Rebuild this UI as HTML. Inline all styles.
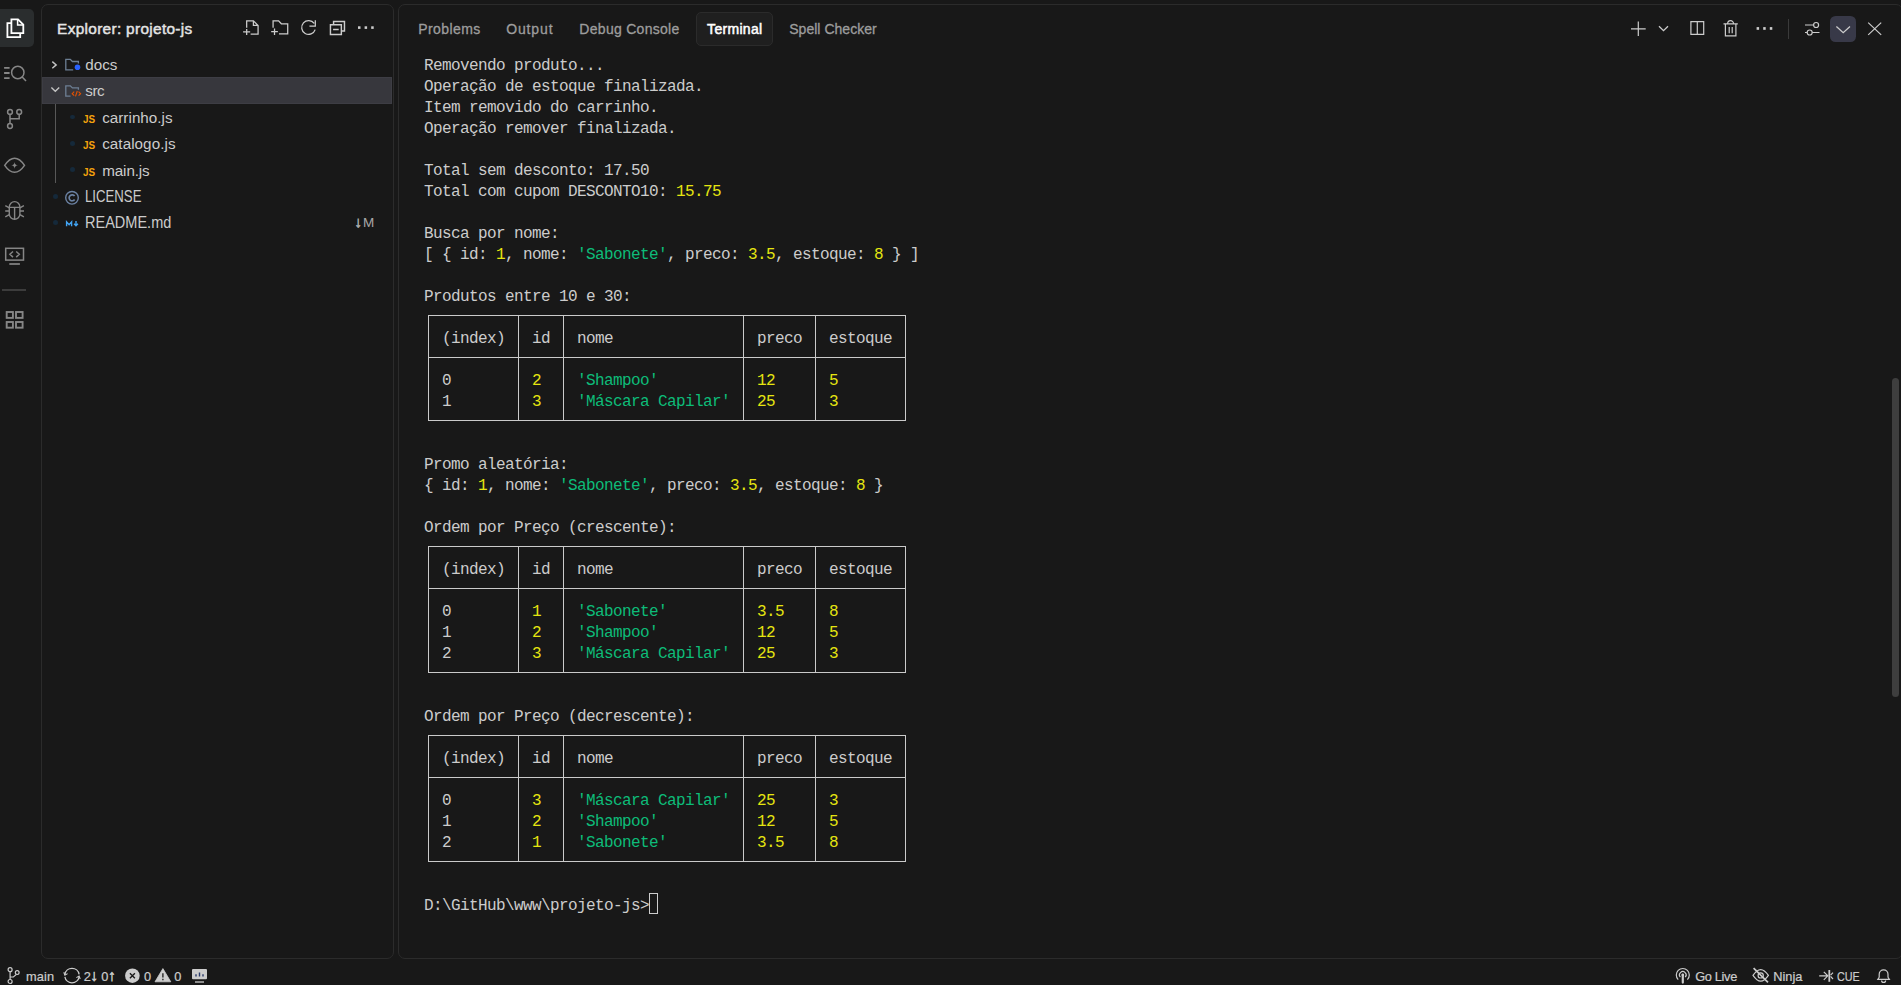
<!DOCTYPE html>
<html lang="pt-BR">
<head>
<meta charset="utf-8">
<title>projeto-js - Terminal</title>
<style>
*{box-sizing:border-box;margin:0;padding:0}
html,body{width:1901px;height:985px;overflow:hidden;background:#181818}
body{position:relative;font-family:"Liberation Sans",sans-serif;color:#ccc;font-size:15.6px}
#ico{position:absolute;left:0;top:0;width:1901px;height:985px;pointer-events:none}
/* activity bar */
#act-active{position:absolute;left:-6px;top:9px;width:40px;height:38px;border-radius:5px;background:#2a2d2e}
#act-sep{position:absolute;left:2px;top:289px;width:24px;height:2px;background:#3c3c3c}
/* sidebar */
#side{position:absolute;left:41px;top:4px;width:353px;height:955px;border:1px solid #2b2b2b;border-radius:7px;background:#181818}
.row{position:absolute;left:42px;width:350px;height:27px}
.row.sel{background:#37373d;box-shadow:inset 0 0 0 1px #3d3d44}
.ttl,.lbl,.bdg,.tab,.st,.js{position:absolute;white-space:nowrap;line-height:22px;transform-origin:0 0}
.ttl{font-size:15.4px;color:#e4e4e4;-webkit-text-stroke:0.45px #e4e4e4}
.lbl{font-size:15.2px;color:#ccc}
.lbl.cap{font-size:15.7px}
.bdg{font-size:13.5px;color:#a8a8a8}
.dot{position:absolute;width:5.2px;height:4.8px;border-radius:2.5px;background:#15293a}
#guide{position:absolute;left:55px;top:104px;width:1px;height:79px;background:#585858}
.js{font-weight:bold;font-size:10.8px;color:#f5a30c}
.ar{font-size:15.5px;line-height:10px;-webkit-text-stroke:0.5px #ccc}
.ar2{font-size:15px;line-height:10px;-webkit-text-stroke:0.6px #a8a8a8}
/* panel */
#panel{position:absolute;left:398px;top:4px;width:1505px;height:955px;border:1px solid #2b2b2b;border-radius:7px;background:#181818}
.tab{font-size:14px;color:#9d9d9d;-webkit-text-stroke:0.3px #9d9d9d}
.tab.on{color:#fff;-webkit-text-stroke:0.5px #fff}
#tab-active{position:absolute;left:696px;top:12px;width:77px;height:34px;border:1px solid #2b2b2b;border-radius:5px;background:#1f1f1f}
#chev-bg{position:absolute;left:1830.4px;top:16.1px;width:26px;height:26.4px;border-radius:5.5px;background:#383948}
#hdr-sep{position:absolute;left:1788px;top:19px;width:1px;height:20px;background:#3a3a3a}
#scroll{position:absolute;left:1892px;top:378px;width:7px;height:319px;border-radius:3.5px;background:#3e3e3e}
/* terminal */
.tl{position:absolute;left:424px;height:21px;line-height:21px;font-family:"Liberation Mono",monospace;font-size:16px;letter-spacing:-0.6016px;color:#ccc;white-space:pre}
.y{color:#e5e510}.g{color:#0dbc79}
.hl{position:absolute;height:1px;background:#cacaca}
.vl{position:absolute;width:1px;background:#cacaca}
#cursor{position:absolute;left:649px;top:893px;width:9px;height:21px;border:1px solid #ccc}
/* status */
.st{font-size:12.8px;color:#ccc;-webkit-text-stroke:0.2px #ccc}
</style>
</head>
<body>
<!-- ACTIVITY BAR -->
<div id="act-active"></div>
<div id="act-sep"></div>

<!-- SIDEBAR -->
<div id="side"></div>
<div class="row sel" style="top:77px"></div>
<div id="guide"></div>
<div class="dot" style="left:69.8px;top:114.6px"></div>
<div class="dot" style="left:69.8px;top:141px"></div>
<div class="dot" style="left:69.8px;top:167.4px"></div>
<div class="dot" style="left:52.8px;top:194.1px"></div>
<div class="dot" style="left:52.8px;top:220.2px"></div>

<!-- PANEL -->
<div id="panel"></div>
<div id="tab-active"></div>
<div id="chev-bg"></div>
<div id="hdr-sep"></div>
<div id="scroll"></div>

<!-- TEXT LABELS -->
<div class="ttl" style="left:57.12px;top:17.60px;letter-spacing:0.314px">Explorer: projeto-js</div>
<div class="lbl" style="left:85.22px;top:54.00px;letter-spacing:0.040px">docs</div>
<div class="lbl" style="left:85.22px;top:80.40px;letter-spacing:-0.383px">src</div>
<div class="lbl" style="left:102.18px;top:106.80px;letter-spacing:0.035px">carrinho.js</div>
<div class="lbl" style="left:102.18px;top:133.20px;letter-spacing:0.070px">catalogo.js</div>
<div class="lbl" style="left:102.22px;top:159.60px;letter-spacing:-0.105px">main.js</div>
<div class="lbl cap" style="left:85.36px;top:186.00px;letter-spacing:0.000px;transform:scaleX(0.8409)">LICENSE</div>
<div class="lbl cap" style="left:85.36px;top:212.40px;letter-spacing:0.000px;transform:scaleX(0.9252)">README.md</div>
<div class="bdg" style="left:354.62px;top:212.20px;letter-spacing:0.860px"><span class="ar2">↓</span>M</div>
<div class="tab" style="left:418.34px;top:18.00px;letter-spacing:0.394px">Problems</div>
<div class="tab" style="left:506.16px;top:18.00px;letter-spacing:0.883px">Output</div>
<div class="tab" style="left:579.34px;top:18.00px;letter-spacing:0.289px">Debug Console</div>
<div class="tab on" style="left:707.08px;top:18.00px;letter-spacing:0.315px">Terminal</div>
<div class="tab" style="left:789.26px;top:18.00px;letter-spacing:0.026px">Spell Checker</div>
<div class="st" style="left:26.08px;top:966.20px;letter-spacing:0.124px">main</div>
<div class="st" style="left:83.70px;top:966.20px;letter-spacing:-0.279px">2<span class="ar">↓</span> 0<span class="ar">↑</span></div>
<div class="st" style="left:143.90px;top:966.20px;letter-spacing:0.475px">0</div>
<div class="st" style="left:174.20px;top:966.20px;letter-spacing:0.475px">0</div>
<div class="st" style="left:1695.20px;top:966.20px;letter-spacing:-0.341px">Go Live</div>
<div class="st" style="left:1773.20px;top:966.20px;letter-spacing:0.026px">Ninja</div>
<div class="st" style="left:1837.14px;top:966.20px;letter-spacing:0.000px;transform:scaleX(0.8433)">CUE</div>
<div class="js" style="left:82.60px;top:108.00px;letter-spacing:0.000px;transform:scaleX(0.92)">JS</div>
<div class="js" style="left:82.60px;top:134.40px;letter-spacing:0.000px;transform:scaleX(0.92)">JS</div>
<div class="js" style="left:82.60px;top:160.80px;letter-spacing:0.000px;transform:scaleX(0.92)">JS</div>

<!-- TERMINAL -->
<div class="tl" style="top:56px">Removendo produto...</div>
<div class="tl" style="top:77px">Operação de estoque finalizada.</div>
<div class="tl" style="top:98px">Item removido do carrinho.</div>
<div class="tl" style="top:119px">Operação remover finalizada.</div>
<div class="tl" style="top:161px">Total sem desconto: 17.50</div>
<div class="tl" style="top:182px">Total com cupom DESCONTO10: <span class="y">15.75</span></div>
<div class="tl" style="top:224px">Busca por nome:</div>
<div class="tl" style="top:245px">[ { id: <span class="y">1</span>, nome: <span class="g">'Sabonete'</span>, preco: <span class="y">3.5</span>, estoque: <span class="y">8</span> } ]</div>
<div class="tl" style="top:287px">Produtos entre 10 e 30:</div>
<div class="tl" style="top:329px">  (index)   id   nome                preco   estoque</div>
<div class="tl" style="top:371px">  0         <span class="y">2</span>    <span class="g">'Shampoo'</span>           <span class="y">12</span>      <span class="y">5</span></div>
<div class="tl" style="top:392px">  1         <span class="y">3</span>    <span class="g">'Máscara Capilar'</span>   <span class="y">25</span>      <span class="y">3</span></div>
<div class="tl" style="top:455px">Promo aleatória:</div>
<div class="tl" style="top:476px">{ id: <span class="y">1</span>, nome: <span class="g">'Sabonete'</span>, preco: <span class="y">3.5</span>, estoque: <span class="y">8</span> }</div>
<div class="tl" style="top:518px">Ordem por Preço (crescente):</div>
<div class="tl" style="top:560px">  (index)   id   nome                preco   estoque</div>
<div class="tl" style="top:602px">  0         <span class="y">1</span>    <span class="g">'Sabonete'</span>          <span class="y">3.5</span>     <span class="y">8</span></div>
<div class="tl" style="top:623px">  1         <span class="y">2</span>    <span class="g">'Shampoo'</span>           <span class="y">12</span>      <span class="y">5</span></div>
<div class="tl" style="top:644px">  2         <span class="y">3</span>    <span class="g">'Máscara Capilar'</span>   <span class="y">25</span>      <span class="y">3</span></div>
<div class="tl" style="top:707px">Ordem por Preço (decrescente):</div>
<div class="tl" style="top:749px">  (index)   id   nome                preco   estoque</div>
<div class="tl" style="top:791px">  0         <span class="y">3</span>    <span class="g">'Máscara Capilar'</span>   <span class="y">25</span>      <span class="y">3</span></div>
<div class="tl" style="top:812px">  1         <span class="y">2</span>    <span class="g">'Shampoo'</span>           <span class="y">12</span>      <span class="y">5</span></div>
<div class="tl" style="top:833px">  2         <span class="y">1</span>    <span class="g">'Sabonete'</span>          <span class="y">3.5</span>     <span class="y">8</span></div>
<div class="tl" style="top:896px">D:\GitHub\www\projeto-js&gt;</div>
<i class="hl" style="left:428px;top:315px;width:478px"></i>
<i class="hl" style="left:428px;top:357px;width:478px"></i>
<i class="hl" style="left:428px;top:420px;width:478px"></i>
<i class="vl" style="left:428px;top:315px;height:106px"></i>
<i class="vl" style="left:518px;top:315px;height:106px"></i>
<i class="vl" style="left:563px;top:315px;height:106px"></i>
<i class="vl" style="left:743px;top:315px;height:106px"></i>
<i class="vl" style="left:815px;top:315px;height:106px"></i>
<i class="vl" style="left:905px;top:315px;height:106px"></i>
<i class="hl" style="left:428px;top:546px;width:478px"></i>
<i class="hl" style="left:428px;top:588px;width:478px"></i>
<i class="hl" style="left:428px;top:672px;width:478px"></i>
<i class="vl" style="left:428px;top:546px;height:127px"></i>
<i class="vl" style="left:518px;top:546px;height:127px"></i>
<i class="vl" style="left:563px;top:546px;height:127px"></i>
<i class="vl" style="left:743px;top:546px;height:127px"></i>
<i class="vl" style="left:815px;top:546px;height:127px"></i>
<i class="vl" style="left:905px;top:546px;height:127px"></i>
<i class="hl" style="left:428px;top:735px;width:478px"></i>
<i class="hl" style="left:428px;top:777px;width:478px"></i>
<i class="hl" style="left:428px;top:861px;width:478px"></i>
<i class="vl" style="left:428px;top:735px;height:127px"></i>
<i class="vl" style="left:518px;top:735px;height:127px"></i>
<i class="vl" style="left:563px;top:735px;height:127px"></i>
<i class="vl" style="left:743px;top:735px;height:127px"></i>
<i class="vl" style="left:815px;top:735px;height:127px"></i>
<i class="vl" style="left:905px;top:735px;height:127px"></i>

<div id="cursor"></div>

<!-- ICONS -->
<svg id="ico" viewBox="0 0 1901 985" fill="none" stroke-linecap="butt" stroke-linejoin="miter">
<!-- activity bar -->
<g stroke="#ffffff" stroke-width="1.8">
  <path d="M11.4 19.4H18L23.3 24.7V33.1H11.4Z"/>
  <path d="M17.6 19.4V25H23.3" stroke-width="1.5"/>
  <path d="M11.4 23.2H7.4V37.2H20.2V33.1"/>
</g>
<g stroke="#868686" stroke-width="1.5">
  <!-- search list -->
  <path d="M4.1 67.8H9.6M4.1 73H9.6M4.1 78.1H9.6" stroke-width="1.8"/>
  <circle cx="17.8" cy="72.5" r="6.2"/>
  <path d="M22.2 76.9L26 80.9"/>
  <!-- source control -->
  <circle cx="10" cy="111.9" r="2.4"/><circle cx="19.2" cy="111.9" r="2.4"/><circle cx="10" cy="126" r="2.4"/>
  <path d="M10 114.3V123.6M10 118.7H19.2V114.3"/>
  <!-- eye -->
  <path d="M4.7 165.3Q9.5 158.2 14.6 158.2Q19.7 158.2 24.5 165.3Q19.7 172.3 14.6 172.3Q9.5 172.3 4.7 165.3Z"/>
  <path d="M14.6 161.9Q14.9 165 18 165.3Q14.9 165.6 14.6 168.7Q14.3 165.6 11.2 165.3Q14.3 165 14.6 161.9Z" fill="#868686" stroke="none"/>
  <!-- bug -->
  <rect x="9.3" y="201.6" width="10.6" height="17.6" rx="5.3" stroke-width="1.4"/>
  <path d="M9.3 207.4H19.9M14.6 207.4V219.2M9.3 211H5.2M19.9 211H24M9.3 207.8L5.3 205.7M19.9 207.8L23.9 205.7M9.3 214.6L5.3 216.9M19.9 214.6L23.9 216.9" stroke-width="1.4"/>
  <!-- monitor -->
  <rect x="5.7" y="248.3" width="17.8" height="11.8"/>
  <path d="M9.3 264H19.9" stroke-width="1.7"/>
  <path d="M13 251.5L9.9 254.3L13 257.1M16.2 251.5L19.3 254.3L16.2 257.1"/>
  <!-- grid -->
  <g stroke-width="1.9"><rect x="6.7" y="312" width="6.2" height="5.9"/><rect x="16" y="312" width="6.6" height="5.9"/><rect x="6.7" y="322" width="6.2" height="5.7"/><rect x="16" y="322" width="6.6" height="5.7"/></g>
</g>
<!-- sidebar header actions (16-grid scaled 1.2) -->
<g stroke="#cccccc" stroke-width="1.05">
 <g transform="translate(241.4 17.9) scale(1.2)">
  <path d="M4.4 8.2V2.4H10L13.9 6.3V13.6H7.7M10 2.4V6.3H13.9M1.4 11.7H7.3M4.4 9.2V14.2"/>
 </g>
 <g transform="translate(270.2 17.9) scale(1.2)">
  <path d="M2.4 8.2V2.4H7L9.3 4.9H14.6V13.3H7.3M0.8 11.5H6.4M3.6 8.9V14.2"/>
 </g>
 <g transform="translate(299 17.9) scale(1.2)">
  <path d="M12.65 4.62A5.75 5.75 0 1 0 13.47 9.78M13.6 2V6.9H8.7"/>
 </g>
 <g transform="translate(327.8 17.9) scale(1.2)" stroke-width="1.2">
  <path d="M2.2 5.7H11.3V13.8H2.2ZM4.4 9.6H9.1M4.8 5.2V3H13.9V10.9H11.8"/>
 </g>
 <g fill="#cccccc" stroke="none"><rect x="358" y="26.3" width="2.5" height="2.6"/><rect x="364.6" y="26.3" width="2.5" height="2.6"/><rect x="371.2" y="26.3" width="2.5" height="2.6"/></g>
</g>
<!-- tree twisties -->
<g stroke="#c5c5c5" stroke-width="1.4">
 <path d="M52.3 61.6L56.2 64.9L52.3 68.2"/>
 <path d="M51.4 87.6L55.3 91.2L59.2 87.6"/>
</g>
<!-- folder icons -->
<g stroke="#6d7f94" stroke-width="1.3">
 <path d="M73.2 69.8H65.8V59.4H70.3L72.4 61.5H78.4V63.4"/>
 <path d="M70.5 96.2H65.8V85.8H70.3L72.4 87.9H78.4V89.8"/>
</g>
<circle cx="77.5" cy="67.3" r="2.8" fill="#2962ff"/>
<g stroke="#e65100" stroke-width="1.1"><path d="M74.2 91.7L72.2 93.7L74.2 95.7M78.6 91.7L80.6 93.7L78.6 95.7M77.3 91L75.5 96.4"/></g>
<!-- license icon -->
<g stroke="#6b82a3"><circle cx="72" cy="197.8" r="6.3" stroke-width="1.4"/><path d="M74.6 196.1A3 3 0 1 0 74.6 199.5" stroke-width="1.7"/></g>
<!-- markdown icon -->
<g stroke="#42a5f5" stroke-width="1.4"><path d="M66.6 226.3V221.9L69.1 224.7L71.6 221.9V226.3"/><path d="M76 221V225.4M74.1 223.7L76 225.8L77.9 223.7"/></g>
<!-- panel actions -->
<g stroke="#cccccc" stroke-width="1.2">
 <path d="M1631 28.8H1645.7M1638.3 21.6V36.1"/>
 <path d="M1659 26.3L1663.5 30.7L1668 26.3" stroke-width="1.3"/>
 <path d="M1690.9 21.7H1703.7V34.4H1690.9ZM1697.3 21.7V34.4"/>
 <path d="M1723.5 23.9H1737.8M1727.6 23.9A3 3.2 0 0 1 1733.6 23.9M1725.4 24V35.9H1735.9V24M1729.2 27V33.2M1732.2 27V33.2"/>
 <g fill="#cccccc" stroke="none"><rect x="1756.6" y="27.1" width="2.5" height="2.7"/><rect x="1763.2" y="27.1" width="2.5" height="2.7"/><rect x="1769.8" y="27.1" width="2.5" height="2.7"/></g>
 <path d="M1805 25H1813.6M1812.2 32.5H1819.5M1805 32.5H1807.2"/>
 <circle cx="1816.1" cy="25" r="2.5"/><circle cx="1809.7" cy="32.5" r="2.5"/>
 <path d="M1836.4 26.6L1843.2 32.7L1850 26.6" stroke-width="1.3"/>
 <path d="M1868.2 22.6L1881.2 34.9M1881.2 22.6L1868.2 34.9" stroke-width="1.2"/>
</g>
<!-- status bar -->
<g stroke="#cccccc" stroke-width="1.2">
 <circle cx="10.1" cy="969.7" r="2"/><circle cx="10.1" cy="981.5" r="2"/><circle cx="17.2" cy="972.6" r="1.9"/>
 <path d="M10.1 971.7V979.5M16.4 974.4L13.4 977H10.1"/>
 <path d="M64.9 974.4A7.2 7.2 0 0 1 79.1 974.4M79.1 976.8A7.2 7.2 0 0 1 64.9 976.8" stroke-width="1.3"/>
 <path d="M63.8 972.2L64.9 975.2L67.6 973.6M80.2 979L79.1 976L76.4 977.6" stroke-width="1.1"/>
</g>
<circle cx="132.4" cy="975.7" r="7.3" fill="#cccccc"/>
<path d="M129.9 973.2L134.9 978.2M134.9 973.2L129.9 978.2" stroke="#181818" stroke-width="1.3"/>
<path d="M162.9 968.6L170.8 981.8H155L162.9 968.6Z" fill="#cccccc" stroke="#cccccc" stroke-width="0.8" stroke-linejoin="round"/>
<path d="M162.9 973.2V977.6M162.9 978.8V980.2" stroke="#181818" stroke-width="1.3"/>
<rect x="192" y="969" width="15" height="10.2" rx="1" fill="#cccccc"/>
<path d="M195 982H204" stroke="#cccccc" stroke-width="1.3"/>
<path d="M196 974.2V976.6M199.5 972.6V976.6M203 974.2V976.6" stroke="#2a3a6a" stroke-width="1.4"/>
<g stroke="#cccccc" stroke-width="1.2">
 <!-- broadcast -->
 <path d="M1678.2 979.6A6.5 6.5 0 1 1 1687.4 979.6"/>
 <path d="M1680.4 977.2A3.3 3.3 0 1 1 1685.2 977.2"/>
 <circle cx="1682.8" cy="975" r="1.3" fill="#cccccc" stroke="none"/>
 <path d="M1682.8 974.6V982.6" stroke-width="2.2" stroke-linecap="round"/>
 <!-- eye closed -->
 <path d="M1753 975.4Q1757 969.6 1760.7 969.6Q1764.4 969.6 1768.4 975.4Q1764.4 981.2 1760.7 981.2Q1757 981.2 1753 975.4Z"/>
 <circle cx="1760.7" cy="975.4" r="2.6"/>
 <path d="M1753.6 968.2L1768 982.4" stroke-width="1.7"/>
 <!-- cue -->
 <path d="M1819.2 975.8H1828M1823.8 971.8L1827.8 975.8L1823.8 979.8M1830.6 975.2L1833 972.6M1830.6 976.4L1833 979" stroke-width="1.2"/>
 <path d="M1829.3 970V981.8" stroke-width="1.8"/>
 <!-- bell -->
 <path d="M1877.8 979.4H1889.4L1888 977.2V974.2A4.4 4.4 0 0 0 1879.2 974.2V977.2Z"/>
 <path d="M1881.6 980.4A2 2 0 0 0 1885.6 980.4"/>
</g>
</svg>

</body>
</html>
